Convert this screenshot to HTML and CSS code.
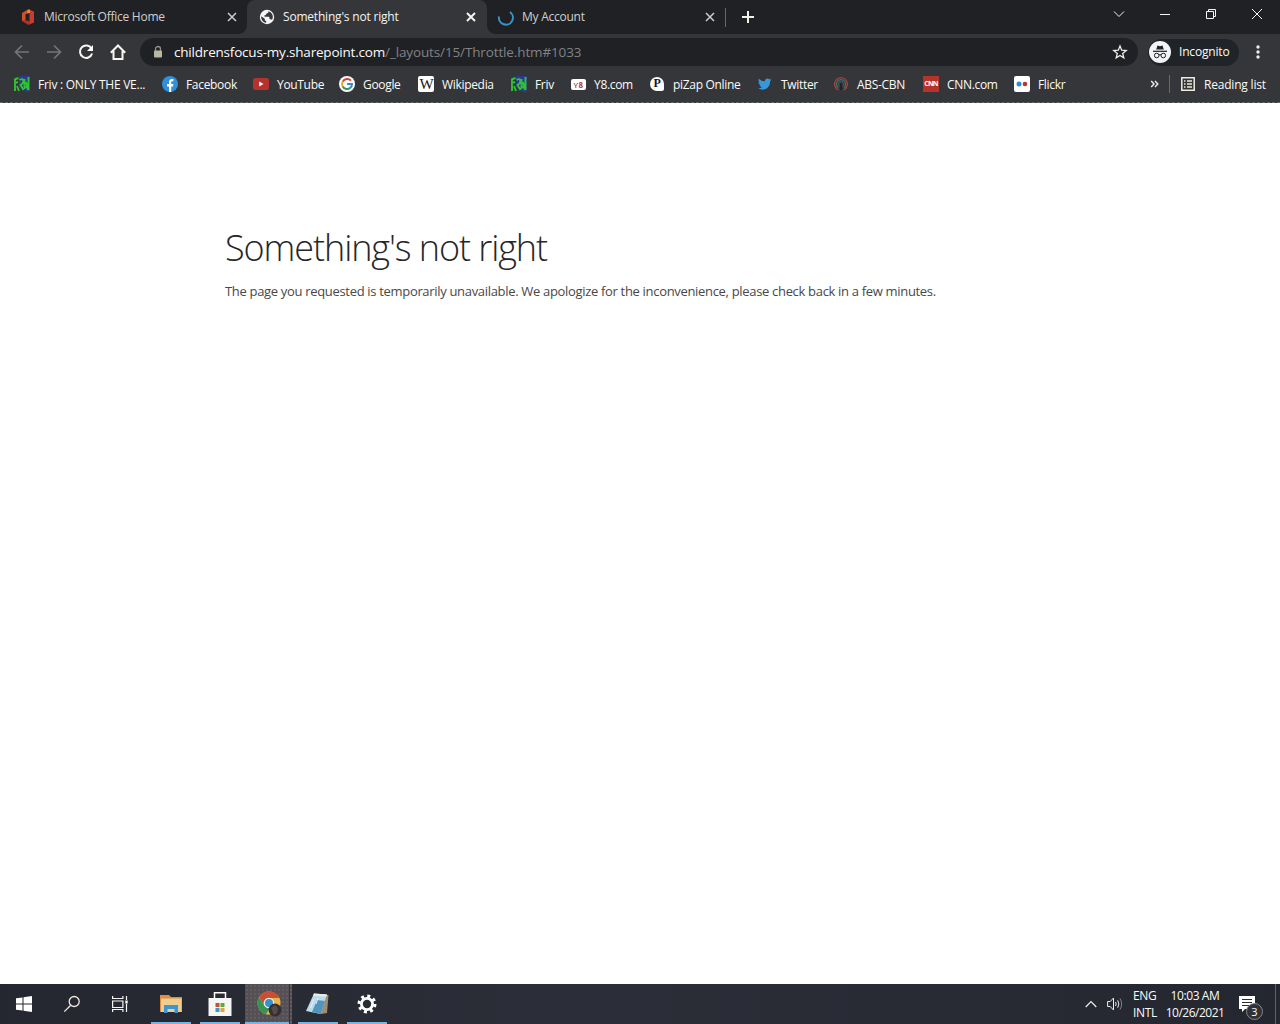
FILE: index.html
```
<!DOCTYPE html>
<html lang="en">
  <head>
    <meta charset="utf-8">
    <title>Something's not right</title>
    <link rel="stylesheet" href="styles.css">
  </head>
  <body>
    <header class="browser">
      <div class="tabs">
        <div class="tab">
          <svg class="icon" viewBox="0 0 16 16"><path d="M2 4l6-3.500 2 .3v3L5.500 5v6.500L2 12z" fill="#d2502b"/><path d="M9.500.8L14 2.500v11l-4.500 2z" fill="#c93b2c"/><path d="M2 12l3.500-.8 4.500 1v3.300l-2 .2z" fill="#b62f22"/><path d="M8 .5l2 .3v3L7 4.500z" fill="#e0913f"/></svg>
          <span class="tab__title">Microsoft Office Home</span>
          <svg class="tab__close" viewBox="0 0 10 10"><path d="M1 1l8 8M9 1L1 9"/></svg>
        </div>
        <div class="tab tab--active">
          <svg class="icon" viewBox="0 0 16 16"><circle cx="8" cy="8" r="7.200" fill="#f4f5f4"/><path d="M9.500 2.300c0 1.500-.5 2-2 2.200L6.800 6 5.500 6.300v1.500h3.800c.8 0 1.200.5 1.200 1.200v1.200h1.600l1 .8A5.900 5.900 0 0 0 9.500 2.300zM2.200 7.200c-.3 3 1.500 6 5 6.600v-1.500l-1.400-1.100V9.800z" fill="#35363a"/></svg>
          <span class="tab__title">Something's not right</span>
          <svg class="tab__close" viewBox="0 0 10 10"><path d="M1 1l8 8M9 1L1 9"/></svg>
        </div>
        <div class="tab tab--last">
          <svg class="icon" viewBox="0 0 16 16"><path d="M1 7.500a7 7 0 1 0 11-4.500" fill="none" stroke="#3993cc" stroke-width="2"/></svg>
          <span class="tab__title">My Account</span>
          <svg class="tab__close" viewBox="0 0 10 10"><path d="M1 1l8 8M9 1L1 9"/></svg>
        </div>
        <svg class="tabs__new" viewBox="0 0 12 12"><path d="M6 0v12M0 6h12"/></svg>
        <div class="window">
          <svg viewBox="0 0 12 12"><path d="M1 3.500l5 5 5-5"/></svg>
          <svg viewBox="0 0 12 12"><path d="M1 6.500h10"/></svg>
          <svg viewBox="0 0 12 12"><path d="M1.500 3.500h7v7h-7zM3.500 3.500v-2h7v7h-2"/></svg>
          <svg viewBox="0 0 12 12"><path d="M1 1l10 10M11 1L1 11"/></svg>
        </div>
      </div>

      <div class="toolbar">
        <div class="toolbar__nav">
          <svg class="icon nav--off" viewBox="0 0 16 16"><path d="M15 8H2M8 1.500L1.500 8 8 14.500"/></svg>
          <svg class="icon nav--off" viewBox="0 0 16 16"><path d="M1 8h13M8 1.500L14.500 8 8 14.500"/></svg>
          <svg class="icon" viewBox="0 0 16 16"><path d="M13.500 4.500A6.200 6.200 0 1 0 14.100 9.500"/><path d="M15 1v6H9z" fill="#fff" stroke="none"/></svg>
          <svg class="icon" viewBox="0 0 16 16"><path d="M.8 8.700L8 1.500l7.200 7.200M3.500 7v8h9V7"/></svg>
        </div>
        <div class="address">
          <svg class="address__lock" viewBox="0 0 10 12"><path d="M2.500 6V3a2.500 2.500 0 0 1 5 0v3" fill="none" stroke="#8f8f85" stroke-width="1.300"/><rect x="1" y="4.500" width="8" height="7" rx="1" fill="#b9b8a4"/></svg>
          <span class="address__url"><span class="address__host">childrensfocus-my.sharepoint.com</span><span class="address__path">/_layouts/15/Throttle.htm#1033</span></span>
          <svg class="address__star" viewBox="0 0 14 14"><path d="M7 1l1.700 4.200 4.500.3-3.500 2.900 1.100 4.400L7 10.400l-3.800 2.400 1.100-4.400L.8 5.500l4.500-.3z"/></svg>
        </div>
        <div class="profile">
          <svg class="profile__pic" viewBox="0 0 22 22"><circle cx="11" cy="11" r="11" fill="#f1f3f4"/><path d="M7.200 8.500L8.500 4.500l2.500.7 2.500-.7 1.300 4z" fill="#202124"/><path d="M4 10.300h14" stroke="#202124" stroke-width="1.200"/><g fill="none" stroke="#202124"><circle cx="7.700" cy="14.500" r="2.300"/><circle cx="14.300" cy="14.500" r="2.300"/><path d="M9.900 14q1.100-.6 2.200 0"/></g></svg>
          <span class="profile__name">Incognito</span>
        </div>
        <svg class="toolbar__menu" viewBox="0 0 4 16"><circle cx="2" cy="3" r="1.700"/><circle cx="2" cy="8" r="1.700"/><circle cx="2" cy="13" r="1.700"/></svg>
      </div>

      <div class="bookmarks">
        <div class="bookmarks__list">
          <div class="bookmark">
            <svg class="icon" viewBox="0 0 16 16"><path d="M5 0h11v16h-4L5 11z" fill="#2b3a8c"/><path d="M.5 3.500L4.500 2M1 3v4l3-1M1 8v7M3 10l2 5M5.500 4c5-3 5 3 1 5l3 5M10.500 3v9l2-1M12 6l2 8M14.500 1v13" fill="none" stroke="#32c135" stroke-width="1.900"/></svg>
            <span class="bookmark__wide">Friv : ONLY THE VE...</span>
          </div>
          <div class="bookmark">
            <svg class="icon" viewBox="0 0 16 16"><circle cx="8" cy="8" r="8" fill="#3090dc"/><path d="M7 16v-5.500H5V8h2V6c0-2 1.200-3 3-3h1.400v2.200H10c-.7 0-.8.4-.8 1V8h2.200l-.4 2.500H9.200V16z" fill="#fff"/></svg>
            <span>Facebook</span>
          </div>
          <div class="bookmark">
            <svg class="icon" viewBox="0 0 16 16"><rect y="2" width="16" height="12" rx="2.500" fill="#b5322d"/><path d="M6.200 5.500v5l4.300-2.500z" fill="#fff"/></svg>
            <span>YouTube</span>
          </div>
          <div class="bookmark">
            <svg class="icon" viewBox="0 0 16 16"><circle cx="8" cy="8" r="8" fill="#fff"/><g fill="none" stroke-width="2"><path d="M12 4.700A5 5 0 0 0 3.700 5.600" stroke="#cf4430"/><path d="M3.700 5.600a5 5 0 0 0 0 4.800" stroke="#e7a536"/><path d="M3.700 10.400a5 5 0 0 0 7.500 1.500" stroke="#349652"/><path d="M11.200 11.900A5 5 0 0 0 13 8H8" stroke="#378bd0"/></g></svg>
            <span>Google</span>
          </div>
          <div class="bookmark">
            <span class="badge badge--wiki">W</span>
            <span>Wikipedia</span>
          </div>
          <div class="bookmark">
            <svg class="icon" viewBox="0 0 16 16"><path d="M5 0h11v16h-4L5 11z" fill="#2b3a8c"/><path d="M.5 3.500L4.500 2M1 3v4l3-1M1 8v7M3 10l2 5M5.500 4c5-3 5 3 1 5l3 5M10.500 3v9l2-1M12 6l2 8M14.500 1v13" fill="none" stroke="#32c135" stroke-width="1.900"/></svg>
            <span>Friv</span>
          </div>
          <div class="bookmark">
            <span class="badge badge--y8">Y<b>8</b></span>
            <span>Y8.com</span>
          </div>
          <div class="bookmark">
            <span class="badge badge--pizap">P</span>
            <span>piZap Online</span>
          </div>
          <div class="bookmark">
            <svg class="icon" viewBox="0 0 16 16"><path d="M14.500 3.600l-1.600.5 1.100-1.500-1.800.7c-2-1.700-4.600-.2-4.300 2C5.600 5.400 3.500 4.500 2 2.700c-1 1.500-.3 3 .8 3.900L1.500 6.200c0 1.500.9 2.500 2.300 2.900l-1.200.1c.4 1.100 1.300 1.800 2.600 1.900-1.200.9-2.500 1.200-4.200 1.200 5.500 3.300 12.300.4 12.100-7.100z" fill="#3498db"/></svg>
            <span>Twitter</span>
          </div>
          <div class="bookmark">
            <svg class="icon" viewBox="0 0 16 16" fill="none"><path d="M5.500 14a6.400 6.400 0 1 1 5 0" stroke="#a8413b" stroke-width="1.300"/><path d="M5 11.700a4.600 4.600 0 1 1 6 0" stroke="#3a7a62" stroke-width="1.200"/><path d="M6.300 10.300a2.700 2.700 0 1 1 3.400 0" stroke="#41578b"/><path d="M8 7.500V14" stroke="#18191d" stroke-width="1.300"/></svg>
            <span>ABS-CBN</span>
          </div>
          <div class="bookmark">
            <span class="badge badge--cnn">CNN</span>
            <span>CNN.com</span>
          </div>
          <div class="bookmark">
            <svg class="icon" viewBox="0 0 16 16"><rect width="16" height="16" rx="2" fill="#fff"/><circle cx="5" cy="8" r="2.500" fill="#338bd4"/><circle cx="11" cy="8" r="2.300" fill="#b93629"/></svg>
            <span>Flickr</span>
          </div>
        </div>
        <svg class="bookmarks__more" viewBox="0 0 8 8"><path d="M.7 1L3.500 4 .7 7M4.500 1l2.800 3-2.800 3"/></svg>
        <div class="reading">
          <svg class="reading__icon" viewBox="0 0 14 14"><path d="M.8.8h12.400v12.400H.8zM3 4h1.500M3 7h1.500M3 10h1.500M6 4h5M6 7h5M6 10h5"/></svg>
          <span class="reading__label">Reading list</span>
        </div>
      </div>
    </header>

    <main class="page">
      <h1 class="page__title">Something's not right</h1>
      <p class="page__text">The page you requested is temporarily unavailable. We apologize for the inconvenience, please check back in a few minutes.</p>
    </main>

    <footer class="taskbar">
      <div class="taskbar__apps">
        <div class="app"><svg class="app__icon" viewBox="0 0 16 16"><path d="M0 2.300L6.500 1.400v6.100H0zM7.500 1.200L16 0v7.500H7.500zM0 8.500h6.500v6.100L0 13.700zM7.500 8.500H16V16l-8.500-1.200z" fill="#fff"/></svg></div>
        <div class="app"><svg class="app__icon" viewBox="0 0 16 16" fill="none" stroke="#eeeade" stroke-width="1.300"><circle cx="10.200" cy="5.500" r="5"/><path d="M6.700 9.200L.3 15.600"/></svg></div>
        <div class="app"><svg class="app__icon" viewBox="0 0 16 16" fill="none" stroke="#f5f5f5" stroke-width="1.200"><path d="M.6 0v2.500h10.300V0M.6 5h10.300v6.500H.6zM.6 16v-2.500h10.300V16M14.500 0v4M14.500 8v8"/><path d="M13.300 4.500h2.400v3h-2.400z" fill="#fff" stroke="none"/></svg></div>
        <div class="app app--open app--files"><svg viewBox="0 0 22 18"><path d="M0 0h9l2 2h11v15H0z" fill="#dd8e43"/><path d="M1 3.500h20.500V17H1z" fill="#edce8e"/><path d="M4 18v-8h14v8h-3.500v-4h-7v4z" fill="#3b96d2"/></svg></div>
        <div class="app app--open"><svg viewBox="0 0 24 24"><path d="M6.500 7V.8h11V7" fill="none" stroke="#fff" stroke-width="1.500"/><path d="M.5 6h23v18H.5z" fill="#f5f6f4"/><path d="M7.500 11h4v4h-4z" fill="#c45334"/><path d="M12.500 11h4v4h-4z" fill="#5aad35"/><path d="M7.500 16h4v4h-4z" fill="#3b98cb"/><path d="M12.500 16h4v4h-4z" fill="#e5a33a"/></svg></div>
        <div class="app app--open app--active"><svg viewBox="0 0 24 26"><circle cx="12" cy="12" r="11.500" fill="#e7b849"/><path d="M2 6a11.500 11.500 0 0 1 20.500 1H12a5.500 5.500 0 0 0-5 7z" fill="#c94e36"/><path d="M2 6l5.500 9 5 2.500L9 23.200A11.500 11.500 0 0 1 2 6z" fill="#379455"/><circle cx="12" cy="12" r="5.300" fill="#eee"/><circle cx="12" cy="12" r="4" fill="#3b91ce"/><circle cx="18" cy="19" r="6.500" fill="#332f32"/><path d="M14 17l4-3 3 3-1 5-3 2z" fill="#574b49"/></svg></div>
        <div class="app app--open"><svg viewBox="0 0 24 24"><path d="M9 2l13.500 1L21 21l-6 1z" fill="#a08c73"/><path d="M8 1.500l13 1L14.500 22 0 19z" fill="#bcdbe9"/><path d="M11 8l8 1-4.500 13L6 20z" fill="#5195bd"/><path d="M8 1.500l13 1-.6 2L7 3.700z" fill="#eceee8"/><path d="M8 7L4.500 16M12 6l-2 6" stroke="#e3eff3"/></svg></div>
        <div class="app app--open"><svg class="app__gear" viewBox="0 0 20 20"><circle cx="10" cy="10" r="5.600" fill="none" stroke="#fff" stroke-width="2.800"/><circle cx="10" cy="10" r="8" fill="none" stroke="#fff" stroke-width="3" stroke-dasharray="3 3.283"/></svg></div>
      </div>
      <div class="tray">
        <svg class="tray__up" viewBox="0 0 12 8"><path d="M.7 7L6 1.500 11.300 7"/></svg>
        <svg class="tray__sound" viewBox="0 0 16 14"><path d="M.6 4.500h2.600L6.500 1v12L3.200 9.500H.6zM8.500 5q1.300 2 0 4M10.700 3.300q2.300 3.700 0 7.400"/><path d="M13 1.500q3.300 5.500 0 11" opacity=".45"/></svg>
        <div class="tray__text tray__lang"><span>ENG</span><span>INTL</span></div>
        <div class="tray__text tray__clock"><span class="tray__time">10:03 AM</span><span>10/26/2021</span></div>
        <div class="tray__notes">
          <svg viewBox="0 0 16 16"><path d="M0 0h16v13H6l-3 3v-3H0z" fill="#fff"/><path d="M3 3.500h10M3 6.500h10M3 9.500h7" stroke="#292b35"/></svg>
          <span class="tray__count">3</span>
        </div>
      </div>
    </footer>
  </body>
</html>
```

FILE: styles.css
```
* {
  box-sizing: border-box;
}
body {
  display: flex;
  flex-direction: column;
  width: 1280px;
  height: 1024px;
  margin: 0;
  overflow: hidden;
  background: #fff;
  color: #fbfbf8;
  font-family: "Open Sans", "Noto Sans", sans-serif;
  font-size: 12px;
  white-space: nowrap;
}
svg {
  display: block;
  flex: none;
  overflow: visible;
}
.icon {
  width: 16px;
  height: 16px;
}

/* Tabs */
.browser {
  flex: none;
  height: 103px;
  background: #35363a;
  border-bottom: 1px dashed #65666a;
}
.tabs {
  display: flex;
  height: 34px;
  background: #202124;
}
.tab {
  display: flex;
  align-items: center;
  width: 247px;
  padding: 0 10px 0 20px;
  color: #cfcfcc;
}
.tab--active {
  position: relative;
  width: 240px;
  padding: 0 11px 0 12px;
  background: #35363a;
  border-radius: 8px 8px 0 0;
  color: #f4f4f0;
}
.tab--active::before,
.tab--active::after {
  content: '';
  position: absolute;
  bottom: 0;
  width: 8px;
  height: 8px;
}
.tab--active::before {
  left: -8px;
  background: radial-gradient(circle at 0 0, transparent 7.5px, #35363a 8px);
}
.tab--active::after {
  right: -8px;
  background: radial-gradient(circle at 100% 0, transparent 7.5px, #35363a 8px);
}
.tab--last {
  width: 239px;
  padding: 0 11px;
  background: linear-gradient(#66676a, #66676a) right 8px / 1px 19px no-repeat;
}
.tab__title {
  flex: 1;
  margin-left: 8px;
  padding-bottom: 1px;
  letter-spacing: -0.25px;
}
.tab--active .tab__title {
  letter-spacing: -0.2px;
}
.tab__close {
  width: 10px;
  height: 10px;
  stroke: currentColor;
  stroke-width: 1.5;
}
.tab--active .tab__close {
  stroke-width: 2;
}
.tabs__new {
  width: 12px;
  height: 12px;
  margin: 11px 0 0 16px;
  stroke: #f1f1e8;
  stroke-width: 2;
}
.window {
  display: flex;
  gap: 34px;
  margin: 8px 17px 0 auto;
}
.window svg {
  width: 12px;
  height: 12px;
  fill: none;
  stroke: #f5f5f5;
}

/* Toolbar */
.toolbar {
  display: flex;
  align-items: center;
  height: 36px;
  padding: 0 19px 0 14px;
}
.toolbar__nav {
  display: flex;
  gap: 16px;
  width: 126px;
}
.toolbar__nav .icon {
  fill: none;
  stroke: #f7f7ef;
  stroke-width: 2;
}
.toolbar__nav .nav--off {
  stroke: #74757a;
  stroke-width: 1.7;
}
.address {
  display: flex;
  align-items: center;
  width: 998px;
  height: 28px;
  padding: 0 11px 0 13px;
  background: #202124;
  border-radius: 14px;
}
.address__lock {
  width: 10px;
  height: 12px;
}
.address__url {
  flex: 1;
  margin-left: 11px;
  font-size: 13.5px;
  letter-spacing: -0.2px;
}
.address__path {
  color: #818286;
  letter-spacing: -0.13px;
}
.address__star {
  width: 14px;
  height: 14px;
  fill: none;
  stroke: #eeeee8;
  stroke-width: 1.3;
}
.profile {
  display: flex;
  align-items: center;
  width: 91px;
  height: 27px;
  margin-left: 10px;
  background: #202429;
  border-radius: 14px;
}
.profile__pic {
  width: 22px;
  height: 22px;
  margin-left: 1px;
}
.profile__name {
  margin-left: 8px;
  padding-bottom: 1px;
  letter-spacing: -0.18px;
}
.toolbar__menu {
  width: 4px;
  height: 16px;
  margin-left: 17px;
  fill: #eeeee5;
}

/* Bookmarks */
.bookmarks {
  display: flex;
  align-items: center;
  height: 28px;
  padding-left: 14px;
}
.bookmarks__list {
  display: grid;
  grid-template-columns: 148px 91px 86px 79px 93px 60px 78px 108px 76px 90px 91px 54px;
  width: 1136px;
}
.bookmark {
  display: flex;
  align-items: center;
  gap: 8px;
  letter-spacing: -0.32px;
}
.bookmark__wide {
  letter-spacing: -0.25px;
}
.badge {
  flex: none;
  width: 16px;
  height: 16px;
  border-radius: 2px;
  background: #fff;
  color: #171719;
  line-height: 16px;
  text-align: center;
}
.badge--wiki {
  font: 15px/16px "Liberation Serif", serif;
  letter-spacing: -1px;
}
.badge--y8 {
  width: 15px;
  height: 11px;
  font-size: 8px;
  line-height: 11px;
  letter-spacing: 0.5px;
}
.badge--y8 b {
  color: #b73a34;
}
.badge--pizap {
  width: 14px;
  height: 14px;
  margin: 0 1px;
  border-radius: 50% 50% 15% 50%;
  font: bold 12px/13px "Liberation Serif", serif;
}
.badge--cnn {
  background: #b8322c;
  border-radius: 0;
  color: #fff;
  font-size: 7px;
  font-weight: bold;
  letter-spacing: -0.8px;
}
.bookmarks__more {
  width: 9px;
  height: 8px;
  fill: none;
  stroke: #eeeee8;
  stroke-width: 1.4;
}
.reading {
  display: flex;
  align-items: center;
  height: 18px;
  margin-left: 10px;
  padding-left: 11px;
  border-left: 1px solid #696a6d;
}
.reading__icon {
  width: 14px;
  height: 14px;
  fill: none;
  stroke: #ecebdd;
  stroke-width: 1.5;
}
.reading__label {
  margin-left: 9px;
  letter-spacing: -0.2px;
}

/* Error page */
.page {
  flex: 1;
  padding: 119px 0 0 225px;
  color: #262626;
}
.page__title {
  margin: 0;
  font-size: 36px;
  font-weight: 300;
  line-height: 52px;
  letter-spacing: -1.08px;
}
.page__text {
  margin: 7px 0 0;
  color: #484848;
  font-size: 13px;
  line-height: 20px;
  letter-spacing: -0.32px;
}

/* Taskbar */
.taskbar {
  display: flex;
  justify-content: space-between;
  flex: none;
  height: 40px;
  background: linear-gradient(90deg, #252730, #2b2d38 45%, #252730);
}
.taskbar__apps {
  display: grid;
  grid-template-columns: 48px 48px 48px 54px 44px 52px 48px 50px;
}
.app {
  display: flex;
  align-items: center;
  justify-content: center;
}
.app svg {
  width: 24px;
  height: 24px;
}
.app .app__icon {
  width: 16px;
  height: 16px;
}
.app--open {
  background: linear-gradient(#76b5e3, #76b5e3) center bottom / 40px 2px no-repeat;
}
.app--files svg {
  width: 22px;
  height: 18px;
}
.app--active {
  margin: 0 2px 0 3px;
  background:
    linear-gradient(#76b5e3, #76b5e3) left bottom / 44px 2px no-repeat,
    linear-gradient(#33333a, #33333a) 44px 0 / 1px 40px no-repeat,
    radial-gradient(circle, #6c6464 0.5px, transparent 1px) 0 0 / 4px 4px,
    #555055;
}
.app--active svg {
  height: 26px;
}
.app .app__gear {
  width: 20px;
  height: 20px;
}
.tray {
  display: flex;
  align-items: center;
  width: 195px;
  border-right: 1px solid #60626a;
  margin-right: 4px;
}
.tray__up {
  width: 12px;
  height: 8px;
  margin-left: 4px;
  fill: none;
  stroke: #eee;
  stroke-width: 1.2;
}
.tray__sound {
  width: 16px;
  height: 14px;
  margin-left: 10px;
  fill: none;
  stroke: #eee;
}
.tray__text {
  display: flex;
  flex-direction: column;
  line-height: 17px;
  letter-spacing: -0.3px;
}
.tray__lang {
  width: 25px;
  margin-left: 10px;
}
.tray__clock {
  align-items: center;
  width: 58px;
  margin-left: 8px;
  letter-spacing: -0.5px;
}
.tray__time {
  letter-spacing: -0.4px;
}
.tray__notes {
  position: relative;
  margin-left: 15px;
}
.tray__notes svg {
  width: 16px;
  height: 16px;
}
.tray__count {
  position: absolute;
  left: 7px;
  top: 7px;
  width: 17px;
  height: 17px;
  border: 1px solid #85878d;
  border-radius: 50%;
  background: #30323a;
  font-size: 11px;
  line-height: 15px;
  text-align: center;
}
```
